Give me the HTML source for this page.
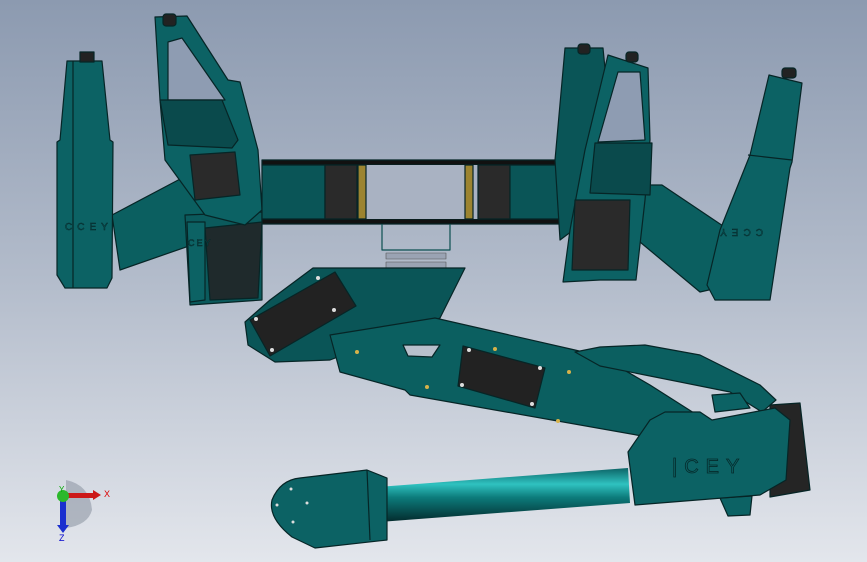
<!DOCTYPE html>
<html><head><meta charset="utf-8"><style>
html,body{margin:0;padding:0}
body{width:867px;height:562px;overflow:hidden}
svg{display:block}
</style></head><body>
<svg width="867" height="562" viewBox="0 0 867 562" xmlns="http://www.w3.org/2000/svg" font-family="Liberation Sans, sans-serif">
<defs>
<linearGradient id="bg" x1="0" y1="0" x2="0" y2="1">
<stop offset="0" stop-color="#8c9ab0"/><stop offset="0.5" stop-color="#b3bccb"/><stop offset="1" stop-color="#e3e6ec"/>
</linearGradient>
<linearGradient id="cyl" x1="0" y1="0" x2="0" y2="1">
<stop offset="0" stop-color="#0d6466"/><stop offset="0.3" stop-color="#2fc2c0"/><stop offset="0.55" stop-color="#0c7a7a"/><stop offset="1" stop-color="#032a2c"/>
</linearGradient>
</defs>
<rect width="867" height="562" fill="url(#bg)"/>
<g stroke="#062526" stroke-width="1.2" stroke-linejoin="round">
<!-- left arm -->
<polygon points="112,215 182,178 215,192 212,238 120,270" fill="#0b5f60"/>
<!-- left lower bracket -->
<polygon points="185,215 262,212 262,300 190,305" fill="#0b5a5c"/>
<polygon points="205,228 262,222 258,298 210,300" fill="#1f2a2c"/>
<polygon points="187,222 205,222 205,300 190,302" fill="#0c6264"/>
<!-- left leg -->
<polygon points="67,61 102,61 110,140 113,142 112,278 107,288 65,288 57,275 57,142 60,140" fill="#0c6264"/>
<line x1="73" y1="61" x2="73" y2="288"/>
<rect x="80" y="52" width="14" height="10" fill="#222"/>
<!-- left frame -->
<polygon points="155,17 187,16 228,80 240,82 258,150 262,210 245,225 205,215 165,160 160,100" fill="#0c6264"/>
<polygon points="168,42 182,38 225,100 168,100" fill="#8e9cb2"/>
<polygon points="160,100 222,100 238,140 232,148 168,145" fill="#0a4a4c"/>
<polygon points="190,155 235,152 240,195 195,200" fill="#2a2a2a"/>
<rect x="163" y="14" width="13" height="12" rx="3" fill="#222"/>
<!-- body -->
<rect x="262" y="160" width="298" height="5" fill="#111"/>
<rect x="262" y="219" width="298" height="5" fill="#111"/>
<rect x="262" y="165" width="298" height="54" fill="#a9b2c2" stroke="none"/>
<rect x="262" y="165" width="63" height="54" fill="#0a5557"/>
<rect x="325" y="165" width="32" height="54" fill="#2a2a2a"/>
<rect x="478" y="165" width="32" height="54" fill="#2a2a2a"/>
<rect x="510" y="165" width="50" height="54" fill="#0a5557"/>
<rect x="358" y="165" width="8" height="54" fill="#9c8430"/>
<rect x="465" y="165" width="8" height="54" fill="#9c8430"/>
<polyline points="382,224 382,250 450,250 450,224" fill="none" stroke="#0b4f50"/>
<rect x="386" y="253" width="60" height="6" fill="#9aa3b3" stroke="#555" stroke-width="0.6"/>
<rect x="386" y="262" width="60" height="6" fill="#9aa3b3" stroke="#555" stroke-width="0.6"/>
<!-- right arm -->
<polygon points="640,185 662,185 732,232 722,287 700,292 640,242" fill="#0b5f60"/>
<!-- right back frame -->
<polygon points="565,48 603,48 612,140 600,210 560,240 555,160" fill="#0a5557"/>
<!-- right front frame -->
<polygon points="608,55 648,68 650,140 645,200 636,280 600,280 563,282 570,230 585,150" fill="#0c6264"/>
<polygon points="618,72 640,72 645,140 598,142" fill="#8e9cb2"/>
<polygon points="595,143 652,143 650,195 590,193" fill="#0a4a4c"/>
<polygon points="575,200 630,200 628,270 572,270" fill="#2a2a2a"/>
<rect x="578" y="44" width="12" height="10" rx="3" fill="#222"/>
<rect x="626" y="52" width="12" height="10" rx="3" fill="#222"/>
<!-- right leg -->
<polygon points="769,75 802,83 792,162 790,168 770,300 715,300 707,285 720,230 750,155" fill="#0c6264"/>
<line x1="748" y1="155" x2="792" y2="160"/>
<rect x="782" y="68" width="14" height="10" rx="3" fill="#222"/>
<!-- front leg servo block -->
<polygon points="313,268 465,268 440,318 330,360 275,362 248,345 245,322 270,300" fill="#0a5557"/>
<!-- long arm -->
<polygon points="330,335 435,318 575,350 600,356 650,385 705,420 665,440 410,395 405,390 340,372" fill="#0b5f60"/>
<polygon points="250,320 335,272 356,306 270,356" fill="#222"/>
<polygon points="463,346 545,368 535,408 458,386" fill="#222"/>
<polygon points="403,345 440,345 432,357 408,356" fill="#b8c0cc"/>
<!-- thin link -->
<polygon points="575,352 600,347 645,345 700,355 760,385 776,400 762,412 730,392 650,376 600,366" fill="#0b5f60"/>
<!-- foot block -->
<polygon points="770,405 800,403 810,490 770,497" fill="#252525"/>
<polygon points="712,395 740,393 750,408 715,412" fill="#0c6264"/>
<polygon points="720,498 752,496 750,515 728,516" fill="#0c6264"/>
<polygon points="628,452 650,420 665,412 700,412 712,420 775,408 790,420 786,480 760,495 635,505" fill="#0c6264"/>
<!-- cylinder -->
<polygon points="377,487 628,468 630,503 379,522" fill="url(#cyl)" stroke="none"/>
<!-- end block -->
<path d="M300,478 L367,470 L387,478 L387,540 L315,548 L292,537 Q268,518 272,500 Q280,480 300,478 Z" fill="#0c6264"/>
<line x1="367" y1="470" x2="370" y2="540"/>
</g>
<g fill="#d6b24a"><circle cx="357" cy="352" r="2"/><circle cx="427" cy="387" r="2"/><circle cx="569" cy="372" r="2"/><circle cx="558" cy="421" r="2"/><circle cx="495" cy="349" r="2"/></g>
<g fill="#ddd"><circle cx="318" cy="278" r="2"/><circle cx="334" cy="310" r="2"/><circle cx="256" cy="319" r="2"/><circle cx="272" cy="350" r="2"/><circle cx="469" cy="350" r="2"/><circle cx="540" cy="368" r="2"/><circle cx="462" cy="385" r="2"/><circle cx="532" cy="404" r="2"/><circle cx="291" cy="489" r="1.5"/><circle cx="277" cy="505" r="1.5"/><circle cx="307" cy="503" r="1.5"/><circle cx="293" cy="522" r="1.5"/></g>
<text x="672" y="473" font-size="20" fill="#0c6264" stroke="#052a2b" stroke-width="0.8" letter-spacing="7">|CEY</text>
<text x="65" y="230" font-size="10" fill="#0c6264" stroke="#062526" stroke-width="0.5" letter-spacing="5">CCEY</text>
<text x="188" y="246" font-size="9" fill="#0c6264" stroke="#062526" stroke-width="0.5" letter-spacing="2">CEY</text>
<text x="727" y="235" font-size="10" fill="#0c6264" stroke="#062526" stroke-width="0.5" letter-spacing="5" transform="rotate(180 745 232)">CCEY</text>
<!-- axes -->
<path d="M66,480 Q90,485 92,510 Q88,525 66,528 Z" fill="#8f98a5" opacity="0.6"/>
<rect x="60" y="493" width="6" height="33" fill="#1a2fcf"/>
<polygon points="57,525 69,525 63,533" fill="#1a2fcf"/>
<rect x="66" y="493" width="28" height="5" fill="#cc1818"/>
<polygon points="93,490 101,495 93,500" fill="#cc1818"/>
<circle cx="63" cy="496" r="6" fill="#2bb82b"/>
<text x="104" y="497" font-size="9" fill="#d00">X</text>
<text x="59" y="541" font-size="9" fill="#00c">Z</text>
<text x="59" y="492" font-size="8" fill="#0a0">Y</text>
</svg>
</body></html>
